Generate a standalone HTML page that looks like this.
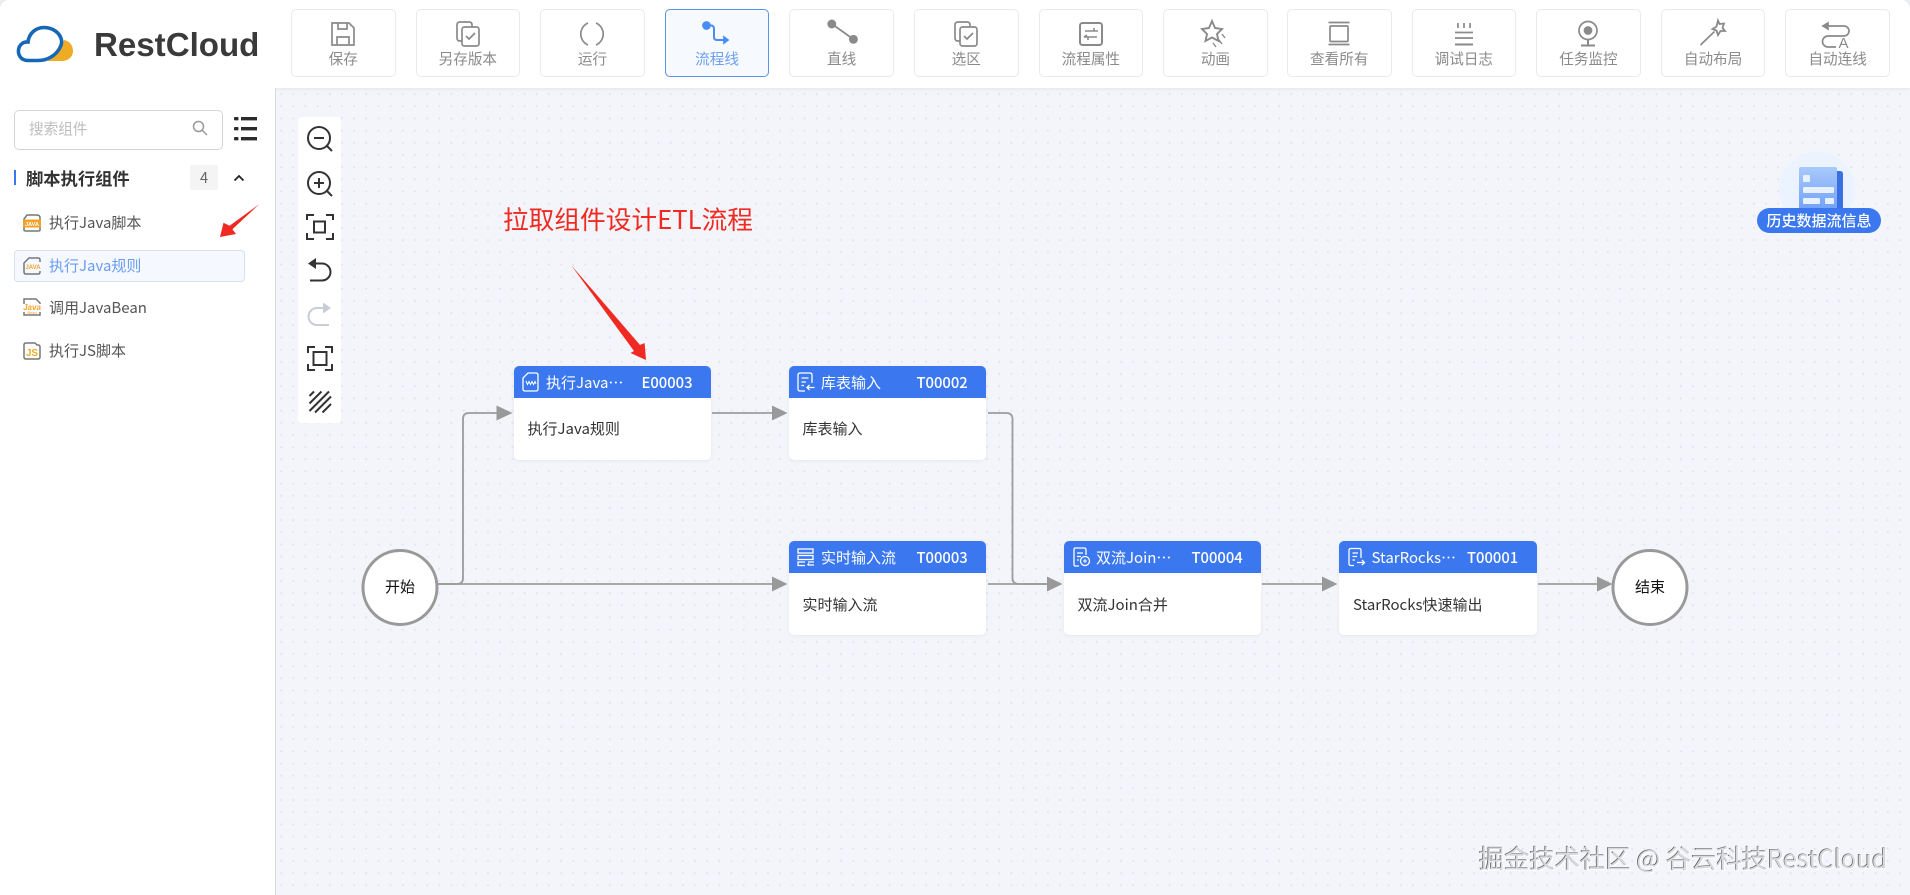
<!DOCTYPE html>
<html lang="zh"><head><meta charset="utf-8"><title>RestCloud</title>
<style>
*{box-sizing:border-box;margin:0;padding:0}
html,body{width:1910px;height:895px;overflow:hidden;background:#eceef2;font-family:"Noto Sans CJK SC","Liberation Sans",sans-serif}
.abs,.btn,.node,.item{position:absolute}
#wrap{position:absolute;left:0;top:0;width:1910px;height:895px;filter:blur(.3px)}
#canvas{position:absolute;left:275px;top:88px;width:1635px;height:807px;background-color:#f3f5fa;background-image:radial-gradient(circle,#e0e3ea .8px,transparent 1.2px);background-size:12.18px 12.18px}
#head{position:absolute;left:0;top:0;width:1910px;height:88px;background:#fff;border-radius:9px 9px 0 0;box-shadow:0 1px 4px rgba(0,0,0,.07)}
#side{position:absolute;left:0;top:88px;width:276px;height:807px;background:#fff;border-right:1px solid #d9dbe0}
.btn{top:9px;width:104.5px;height:68px;background:#fff;border:1px solid #e8eaee;border-radius:5px;text-align:center;color:#8a8a8a;font-size:14.6px}
.btn svg{position:absolute;left:37.25px;top:10px;overflow:visible;fill:none;stroke:#8a8a8a;stroke-width:1.7}
.btn span{position:absolute;left:0;right:0;top:38px;line-height:22px}
.btn.on{background:#f6faff;border-color:#5b93e8;color:#6ea0f2}
.item{left:49px;font-size:15px;line-height:20px;color:#555;white-space:nowrap}
.node{width:197.5px;height:94px;background:#fff;border-radius:5px;box-shadow:0 1px 3px rgba(60,70,90,.08)}
.nh{position:absolute;left:0;top:0;width:100%;height:32px;background:#3b78ef;border-radius:5px 5px 0 0;color:#fff;font-size:15px;line-height:33px}
.nh b{position:absolute;left:32.5px;font-weight:400;white-space:nowrap}
.nh i{position:absolute;left:128px;font-style:normal;font-weight:500;font-size:14.8px}
.nh svg{position:absolute;left:7px;top:6px;fill:none;stroke:#fff;stroke-width:1.3}
.nb{position:absolute;left:14px;top:53px;font-size:15px;line-height:20px;color:#333;white-space:nowrap}
.r2 .nb{top:54px}
</style></head><body>
<div id="wrap">
<div id="canvas"></div>
<div id="head">
<svg class="abs" style="left:0;top:0" width="280" height="88">
<path d="M64 40C70 41 73 46 73 51C73 57 68 61 62 61L47 61C55 58 62 50 64 40Z" fill="#eeac25"/>
<path d="M28 60.500C20.500 60.500 18 54.500 18.500 50C19 45 23 41.500 28 42C29 33 36 27.500 44 27.500C53 27.500 60 33 61.500 40C62.500 45 58 53 51 57C47 59.500 43 60.500 38 60.500Z" fill="#fff" stroke="#1668b4" stroke-width="3.600"/>
<text x="94" y="56" font-family="Liberation Sans" font-weight="700" font-size="33.100" fill="#3a3a3a">RestCloud</text>
</svg>
<div class="btn" style="left:291px"><svg width="28" height="28"><path d="M3 3H20L25 8V25H3Z"/><path d="M9 3V9H18V3M8 25V17H20V25"/></svg><span>保存</span></div>
<div class="btn" style="left:415.600px"><svg width="28" height="28"><path d="M8 21H6Q3 21 3 18V5Q3 2 6 2H15Q18 2 18 5V7"/><rect x="8" y="7" width="17" height="19" rx="2.500"/><path d="M12 16L15 19L21 13"/></svg><span>另存版本</span></div>
<div class="btn" style="left:540.200px"><svg width="28" height="28"><path d="M10 3A12 12 0 0 0 10 25M18 3A12 12 0 0 1 18 25"/></svg><span>运行</span></div>
<div class="btn on" style="left:664.800px"><svg width="28" height="28" style="stroke:#4a8cf5"><circle cx="3.500" cy="5.500" r="3.500" fill="#4a8cf5"/><path d="M3.500 5.500H8Q11 5.500 11 9V17Q11 20 14 20H23" stroke-width="2"/><path d="M21 17L25 20L21 23Z" fill="#4a8cf5"/></svg><span>流程线</span></div>
<div class="btn" style="left:789.400px"><svg width="28" height="28"><circle cx="3.800" cy="4" r="3.600" fill="#8a8a8a"/><circle cx="25.400" cy="19.300" r="3.600" fill="#8a8a8a"/><path d="M4 4L25 19"/></svg><span>直线</span></div>
<div class="btn" style="left:914px"><svg width="28" height="28"><path d="M8 21H6Q3 21 3 18V5Q3 2 6 2H15Q18 2 18 5V7"/><rect x="8" y="7" width="17" height="19" rx="2.500"/><path d="M12 16L15 19L21 13"/></svg><span>选区</span></div>
<div class="btn" style="left:1038.600px"><svg width="28" height="28" style="stroke-width:2"><rect x="3" y="3" width="22" height="22" rx="2.500"/><path d="M8 11H21M17 8V11M7 17H20M11 17V20M7 17L10 15" stroke-width="1.600"/></svg><span>流程属性</span></div>
<div class="btn" style="left:1163.200px"><svg width="28" height="28" style="stroke-width:1.900"><path d="M11 1L14 8L21 9L16 14L17.500 21L11 17.500L4.500 21L6 14L1 9L8 8Z"/><path d="M21 14L24 18M18 20L21 24M12 23L15 27" stroke-width="1.400"/></svg><span>动画</span></div>
<div class="btn" style="left:1287px"><svg width="28" height="28"><path d="M3.500 2.500H24.500M3.500 24.500H24.500"/><rect x="5" y="6" width="18" height="15.500" rx="1"/></svg><span>查看所有</span></div>
<div class="btn" style="left:1411.600px"><svg width="28" height="28"><path d="M8 3V8M14 3V8M20 3V8M5 12.500H23M5 18H23"/><path d="M5 24.500H23" stroke-width="2"/></svg><span>调试日志</span></div>
<div class="btn" style="left:1536.200px"><svg width="28" height="28"><circle cx="14" cy="10.500" r="9"/><circle cx="14" cy="10.500" r="3.500" fill="#8a8a8a"/><path d="M14 19.500V25M7 25.500H21" stroke-width="2"/></svg><span>任务监控</span></div>
<div class="btn" style="left:1660.800px"><svg width="28" height="28"><path d="M1.500 25L15.500 11.500"/><path d="M19 0.500L20.500 4L25 3.500L23.500 8L26 11L21.500 11L19 15L17.500 10.500L13.500 9L17.500 6.500Z" stroke-width="1.800"/></svg><span>自动布局</span></div>
<div class="btn" style="left:1785.400px"><svg width="28" height="28"><path d="M0 6H20A5 5 0 0 1 20 16H4A5.500 5.500 0 0 0 4 27H12"/><path d="M-1 6L4 3V9Z" fill="#8a8a8a"/><text x="14.500" y="28" font-family="Liberation Sans" font-size="15" fill="#8a8a8a" stroke="none">A</text></svg><span>自动连线</span></div>
</div>

<div id="side"></div>
<div class="abs" style="left:14px;top:109.500px;width:209px;height:40px;border:1px solid #d4d6da;border-radius:5px"></div>
<div class="abs" style="left:29px;top:118px;font-size:14.600px;line-height:22px;color:#bdbdbd">搜索组件</div>
<svg class="abs" style="left:190px;top:118px" width="22" height="22" fill="none" stroke="#9a9a9a" stroke-width="1.500"><circle cx="8.500" cy="8.500" r="5"/><path d="M12 12L17 17"/></svg>
<svg class="abs" style="left:232px;top:116px" width="28" height="26" fill="#2b2b2b"><rect x="2" y="1" width="4.500" height="3.400" rx="1"/><rect x="9" y="1" width="16" height="3.400"/><rect x="2" y="11" width="4.500" height="3.400" rx="1"/><rect x="9" y="11" width="16" height="3.400"/><rect x="2" y="21" width="4.500" height="3.400" rx="1"/><rect x="9" y="21" width="16" height="3.400"/></svg>
<div class="abs" style="left:14px;top:170px;width:2px;height:15px;background:#3b78ef"></div>
<div class="abs" style="left:26px;top:165px;font-size:17.300px;line-height:26px;font-weight:700;color:#333">脚本执行组件</div>
<div class="abs" style="left:190px;top:165px;width:28px;height:25px;background:#f4f4f5;border-radius:2px;text-align:center;font-size:14.600px;line-height:25px;color:#666">4</div>
<svg class="abs" style="left:232px;top:172px" width="14" height="12" fill="none" stroke="#222" stroke-width="1.800"><path d="M2.500 8.500L7 4L11.500 8.500"/></svg>

<svg class="abs" style="left:22px;top:213px" width="20" height="20"><path d="M2 6L5 2H15Q18 2 18 5V17Q18 18 16 18H4Q2 18 2 17Z" fill="none" stroke="#777" stroke-width="1.500"/><rect x="1" y="6.500" width="18" height="8" rx="1.500" fill="#f3a32a"/><text x="10" y="13" text-anchor="middle" font-family="Liberation Sans" font-size="5.500" font-weight="700" fill="#fff">JAVA</text></svg>
<div class="item" style="top:212.500px">执行Java脚本</div>
<div class="abs" style="left:14px;top:249.500px;width:231px;height:32px;background:#f5f9ff;border:1px solid #d5e1ef;border-radius:4px"></div>
<svg class="abs" style="left:22px;top:256px" width="20" height="20"><path d="M18 6V4Q18 2 16 2H7L2 7V16Q2 18 4 18H16Q18 18 18 16V15" fill="none" stroke="#777" stroke-width="1.500"/><text x="11" y="13" text-anchor="middle" font-family="Liberation Sans" font-size="6" font-weight="700" fill="#f3a32a">JAVA</text></svg>
<div class="item" style="top:255.500px;color:#6a9cf0">执行Java规则</div>
<svg class="abs" style="left:22px;top:297px" width="20" height="20"><path d="M2 7V2H14L18 6V7M18 15V18H2V15" fill="none" stroke="#777" stroke-width="1.500"/><text x="10" y="13" text-anchor="middle" font-family="Liberation Sans" font-size="8" font-weight="700" font-style="italic" fill="#f3a32a">Java</text><text x="10" y="17" text-anchor="middle" font-family="Liberation Sans" font-size="4" fill="#f3a32a">Bean</text></svg>
<div class="item" style="top:297.500px">调用JavaBean</div>
<svg class="abs" style="left:22px;top:341px" width="20" height="20"><path d="M2 4Q2 2 4 2H13L15 4H16Q18 4 18 6V16Q18 18 16 18H4Q2 18 2 16Z" fill="none" stroke="#777" stroke-width="1.500"/><text x="10" y="15" text-anchor="middle" font-family="Liberation Sans" font-size="10" font-weight="700" fill="#eeac25">JS</text></svg>
<div class="item" style="top:340.500px">执行JS脚本</div>

<svg class="abs" style="left:0;top:0" width="1910" height="895" fill="none">
<g stroke="#9c9c9c" stroke-width="1.800">
<path d="M438 584H457Q463 584 463 578V419Q463 413 469 413H498"/>
<path d="M438 584H773"/>
<path d="M712 413H773"/>
<path d="M988 413H1006Q1012.500 413 1012.500 419V578Q1012.500 584 1019 584H1048"/>
<path d="M988 584H1048"/>
<path d="M1262 584H1323"/>
<path d="M1538 584H1598"/>
</g>
<g fill="#999">
<path d="M496.500 405.500L512.500 413L496.500 420.500Z"/><path d="M772 405.500L787.500 413L772 420.500Z"/><path d="M772 576.500L787.500 584L772 591.500Z"/>
<path d="M1047 576.500L1062.500 584L1047 591.500Z"/><path d="M1322 576.500L1337.500 584L1322 591.500Z"/><path d="M1597 576.500L1612.500 584L1597 591.500Z"/>
</g>
<circle cx="400" cy="587.500" r="37" fill="#fff" stroke="#999" stroke-width="3"/>
<circle cx="1650" cy="587.500" r="37" fill="#fff" stroke="#999" stroke-width="3"/>
<path d="M571 265L640 345L644.600 343L646 360L630.500 353L634 351Z" fill="#f02a22"/>
<path d="M259.500 204L232.400 229.200L236 234L220 237L223.500 222.700L229.600 225.800Z" fill="#f02a22"/>
</svg>
<div class="abs" style="left:362px;top:549px;width:76px;height:76px;text-align:center;line-height:76px;font-size:15px;color:#111">开始</div>
<div class="abs" style="left:1612px;top:549px;width:76px;height:76px;text-align:center;line-height:76px;font-size:15px;color:#111">结束</div>

<div class="abs" style="left:298px;top:117px;width:43px;height:306px;background:#fff;border-radius:4px"></div>
<svg class="abs" style="left:298px;top:117px" width="43" height="306" fill="none" stroke="#333" stroke-width="2" viewBox="298 117 43 306">
<circle cx="319" cy="138" r="11"/><path d="M314 138H324M327 146L332 151"/>
<circle cx="319" cy="183" r="11"/><path d="M314 183H324M319 178V188M327 191L332 196"/>
<path d="M307 220V215H314M326 215H333V220M307 233V239H314M326 239H333V233"/><rect x="314" y="221.500" width="11" height="11"/>
<path d="M311 263.500H322A8.500 8.500 0 0 1 322 280.500H310"/><path d="M308 263.500L316 258V269Z" fill="#333" stroke="none"/>
<g stroke="#c8cdd6"><path d="M328 308H317A8.500 8.500 0 0 0 317 325H329"/><path d="M331 308L323 302.500V313.500Z" fill="#c8cdd6" stroke="none"/></g>
<path d="M308 353V347H315M325 347H332V353M308 364V370H315M325 370H332V364"/><rect x="313.500" y="352" width="13" height="13"/>
<g stroke-width="2"><path d="M309.500 396L314 391.500M309.500 403.500L321.500 391.500M309.500 411L329 391.500M315 412.500L331 396.500M322.500 412.500L331 404"/></g>
</svg>

<div class="abs" style="left:503px;top:199.500px;font-size:25.700px;line-height:38px;color:#f02a22;white-space:nowrap">拉取组件设计ETL流程</div>

<div class="node" style="left:513.500px;top:366px"><div class="nh"><svg width="20" height="20"><path d="M7 1H15Q17 1 17 3V17Q17 19 15 19H4Q2 19 2 17V6Z"/><path d="M5 9L6.500 12.500L8 9.500L9.500 12.500L11 9.500L12.500 12.500L14 9.500L15 12" stroke-width="1"/></svg><b>执行Java…</b><i>E00003</i></div><div class="nb">执行Java规则</div></div>
<div class="node" style="left:788.500px;top:366px"><div class="nh"><svg width="20" height="20"><path d="M9 19H4Q2 19 2 17V3Q2 1 4 1H14Q16 1 16 3V11"/><path d="M5.500 6H12.500M5.500 10H10M5.500 13.500H8M18.500 15.500H11M13.500 13L11 15.500L13.500 18"/></svg><b>库表输入</b><i>T00002</i></div><div class="nb">库表输入</div></div>
<div class="node r2" style="left:788.500px;top:541px"><div class="nh"><svg width="20" height="20"><rect x="2" y="2" width="15" height="4"/><rect x="2" y="8.500" width="15" height="4"/><path d="M9 15H2V18.500H9M18 15H12M18 18H11.500M13 16.500L11.500 18"/></svg><b>实时输入流</b><i>T00003</i></div><div class="nb">实时输入流</div></div>
<div class="node r2" style="left:1063.500px;top:541px"><div class="nh"><svg width="20" height="20"><path d="M8 19H4Q3 19 3 17V3Q3 1 4 1H13Q15 1 15 3V8"/><path d="M6 6H12M6 9.500H10M6 13H8"/><circle cx="14" cy="14" r="4.500"/><path d="M12 14H16M14 12V16" stroke-width="1"/></svg><b>双流Join…</b><i>T00004</i></div><div class="nb">双流Join合并</div></div>
<div class="node r2" style="left:1339px;top:541px"><div class="nh"><svg width="20" height="20"><path d="M8 18.500H5Q3 18.500 3 16.500V3.500Q3 1.500 5 1.500H13Q15 1.500 15 3.500V11"/><path d="M6.500 6H12M6.500 9.500H11M6.500 13H9M11 15.500H18.500M16 13L18.500 15.500L16 18"/></svg><b>StarRocks…</b><i>T00001</i></div><div class="nb">StarRocks快速输出</div></div>

<svg class="abs" style="left:1770px;top:150px" width="95" height="85">
<circle cx="47" cy="40" r="38" fill="#eaf3ff"/>
<path d="M60 21H70Q73 21 73 24V62H60Z" fill="#3a70e2"/>
<defs><linearGradient id="g" x1="0" y1="0" x2="0" y2="1"><stop offset="0" stop-color="#a9c9fc"/><stop offset="1" stop-color="#6f9ff7"/></linearGradient></defs>
<rect x="29" y="17" width="38" height="45" rx="2" fill="url(#g)"/>
<rect x="33" y="25" width="7" height="7" rx="1" fill="#e8f1ff"/><rect x="33" y="37" width="31" height="6" rx="1" fill="#e8f1ff"/><rect x="33" y="48" width="17" height="6" rx="1" fill="#e8f1ff"/><rect x="55" y="48" width="9" height="6" rx="1" fill="#e8f1ff"/>
</svg>
<div class="abs" style="left:1757px;top:207.500px;width:124px;height:25px;background:#3b78ef;border-radius:13px;color:#fff;text-align:center;font-size:15px;font-weight:500;line-height:25px;white-space:nowrap">历史数据流信息</div>

<div class="abs" style="left:1479px;top:839px;font-size:25.300px;line-height:38px;color:#d8d9dd;white-space:nowrap;text-shadow:-.7px -.7px 0 #5a5a5a,1px 1px 0 #fff">掘金技术社区 @ 谷云科技RestCloud</div>
</div>
</body></html>
